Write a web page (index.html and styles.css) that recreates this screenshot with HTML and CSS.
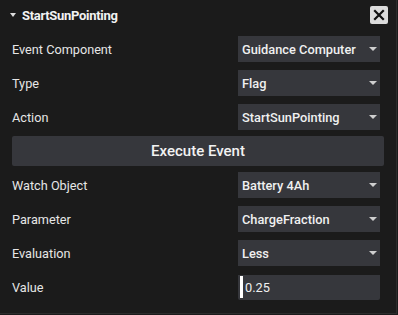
FILE: index.html
```html
<!DOCTYPE html>
<html lang="en">
<head>
<meta charset="UTF-8" />
<title>StartSunPointing</title>
<link rel="stylesheet" href="styles.css">
</head>
<body>

<div class="panel">
  <div class="header">
    <span class="caret"></span>
    <span class="title">StartSunPointing</span>
    <button class="close" aria-label="Close">
      <svg width="12" height="12" viewBox="0 0 12 12"><path d="M2 2L10 10M10 2L2 10" stroke="#111" stroke-width="2.2" stroke-linecap="square"/></svg>
    </button>
  </div>

  <div class="row">
    <div class="label">Event Component</div>
    <div class="select">Guidance Computer<span class="arrow"></span></div>
  </div>
  <div class="row">
    <div class="label">Type</div>
    <div class="select">Flag<span class="arrow"></span></div>
  </div>
  <div class="row">
    <div class="label">Action</div>
    <div class="select">StartSunPointing<span class="arrow"></span></div>
  </div>

  <button class="execute">Execute Event</button>

  <div class="row">
    <div class="label">Watch Object</div>
    <div class="select">Battery 4Ah<span class="arrow"></span></div>
  </div>
  <div class="row">
    <div class="label">Parameter</div>
    <div class="select">ChargeFraction<span class="arrow"></span></div>
  </div>
  <div class="row">
    <div class="label">Evaluation</div>
    <div class="select">Less<span class="arrow"></span></div>
  </div>
  <div class="row">
    <div class="label">Value</div>
    <div class="input"><span class="cursor"></span>0.25</div>
  </div>
</div>

</body>
</html>
```

FILE: styles.css
```css
html, body {
  margin: 0;
  background: #1b1b1b;
}
body {
  font-family: Roboto, "Noto Sans", sans-serif;
  color: #e6e6e6;
  font-size: 12.7px;
}
.panel {
  width: 384px;
  height: 313px;
  background: #1b1b1b;
  border-right: 1px solid #2c2c2c;
  border-bottom: 1px solid #2c2c2c;
  padding: 0 0 0 12px;
  display: flex;
  flex-direction: column;
}
.header {
  height: 30px;
  display: flex;
  align-items: center;
}
.caret {
  width: 0;
  height: 0;
  border-left: 3px solid transparent;
  border-right: 3px solid transparent;
  border-top: 4px solid #ddd;
  margin-left: -2px;
  margin-right: 6px;
}
.title {
  font-weight: 700;
  font-size: 13px;
  letter-spacing: -0.3px;
  color: #f2f2f2;
}
.close {
  margin-left: auto;
  margin-right: 8px;
  width: 18px;
  height: 18px;
  padding: 0;
  border: none;
  border-radius: 2px;
  background: #dcdcdc;
  display: flex;
  align-items: center;
  justify-content: center;
}
.row {
  display: flex;
  align-items: center;
  height: 26px;
  margin-top: 6px;
  margin-bottom: 2px;
}
.label {
  width: 226px;
}
.select, .input {
  position: relative;
  width: 142px;
  height: 26px;
  box-sizing: border-box;
  background: #36373c;
  padding-left: 4px;
  display: flex;
  align-items: center;
  font-weight: 500;
  font-size: 12.8px;
  color: #f0f0f0;
}
.arrow {
  position: absolute;
  right: 3px;
  top: 11px;
  width: 0;
  height: 0;
  border-left: 4px solid transparent;
  border-right: 4px solid transparent;
  border-top: 4px solid #cfcfcf;
}
.input {
  font-weight: 400;
  border-radius: 0 0 2px 2px;
  height: 25px;
  padding-left: 2px;
}
.cursor {
  width: 3px;
  height: 22px;
  background: #fff;
  margin-right: 2px;
}
.execute {
  margin-top: 4px;
  width: 372px;
  height: 30px;
  border: none;
  border-radius: 2px;
  background: #36373c;
  color: #f2f2f2;
  font-family: Roboto, "Noto Sans", sans-serif;
  font-weight: 500;
  font-size: 15px;
}
```
